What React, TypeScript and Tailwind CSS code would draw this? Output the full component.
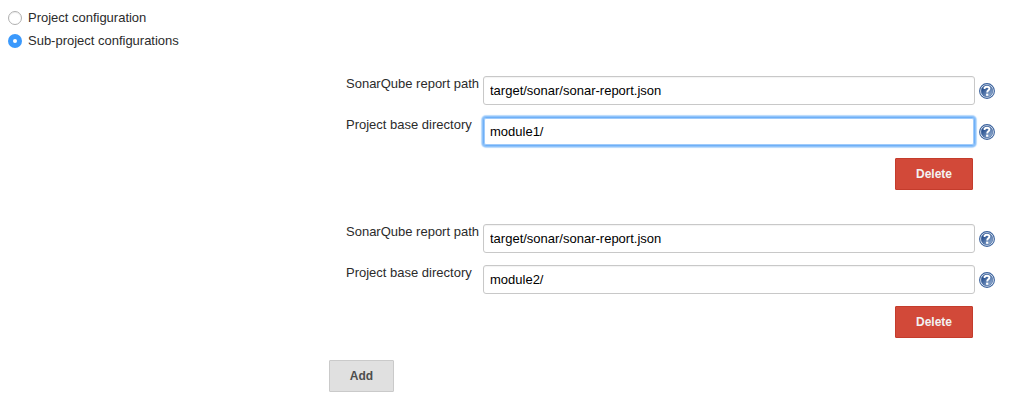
import { useState } from "react";

function HelpIcon() {
  return (
    <svg width="16" height="16" viewBox="0 0 16 16" className="block shrink-0" role="img" aria-label="Help">
      <defs>
        <linearGradient id="helpFill" x1="0" y1="0" x2="1" y2="1">
          <stop offset="0.25" stopColor="#2a5290" />
          <stop offset="1" stopColor="#a5bddc" />
        </linearGradient>
      </defs>
      <circle cx="8" cy="8" r="7.4" fill="#fff" stroke="#39619d" strokeWidth="1.1" />
      <circle cx="8" cy="8" r="5.9" fill="url(#helpFill)" stroke="#3a619c" strokeWidth="0.6" />
      <path d="M5.6 5.9V4.6Q6.4 3.7 8 3.7Q10.4 3.7 10.4 5.6Q10.4 6.7 9.3 7.4Q8.2 8.1 8.2 9.5" fill="none" stroke="#fff" strokeWidth="1.9" />
      <rect x="7.1" y="10.6" width="2.2" height="2.2" fill="#fff" />
    </svg>
  );
}

function Radio({ label, checked, onSelect }: { label: string; checked: boolean; onSelect: () => void }) {
  return (
    <label className="flex h-[23px] items-center">
      <input type="radio" name="scope" className="sr-only" checked={checked} onChange={onSelect} />
      {checked ? (
        <span className="flex size-[14px] items-center justify-center rounded-full bg-[#3b99fc]">
          <span className="size-1 rounded-full bg-white" />
        </span>
      ) : (
        <span className="size-[14px] rounded-full border border-[#b0b0b0] bg-white shadow-[inset_0_1px_1px_#00000012]" />
      )}
      <span className="ml-1.5 tracking-[-0.01px]">{label}</span>
    </label>
  );
}

function Field({ label, value, focused, onChange }: { label: string; value: string; focused?: boolean; onChange: (v: string) => void }) {
  return (
    <label className="flex h-[29px]">
      <span className="w-[137px] shrink-0 whitespace-nowrap leading-[15px]">{label}</span>
      <input
        type="text"
        value={value}
        onChange={(e) => onChange(e.target.value)}
        className={
          focused
            ? "h-[29px] w-[492px] rounded-[3px] border border-[#6fb0f7] bg-white px-1.5 text-black shadow-[0_0_0_1px_#8fc3fa,0_0_1px_2px_#b9dafc,inset_0_0_0_1px_#9fcbfb] outline-none"
            : "h-[29px] w-[492px] rounded-[3px] border border-[#c8c8c8] bg-white px-1.5 text-black shadow-[inset_0_1px_1px_#0000000d] outline-none"
        }
      />
      <span className="ml-1 flex items-center">
        <HelpIcon />
      </span>
    </label>
  );
}

const initialProjects = [
  { path: "target/sonar/sonar-report.json", base: "module1/" },
  { path: "target/sonar/sonar-report.json", base: "module2/" },
];

export default function App() {
  const [subProjects, setSubProjects] = useState(true);
  const [projects, setProjects] = useState(initialProjects);
  const update = (i: number, patch: Partial<(typeof initialProjects)[0]>) =>
    setProjects(projects.map((p, n) => (n === i ? { ...p, ...patch } : p)));

  return (
    <main className="h-[400px] w-[1018px] overflow-hidden bg-white pl-2 pt-[6px] font-['Liberation_Sans',Arial,sans-serif] text-[13px] text-[#2b2b2b]">
      <Radio label="Project configuration" checked={!subProjects} onSelect={() => setSubProjects(false)} />
      <Radio label="Sub-project configurations" checked={subProjects} onSelect={() => setSubProjects(true)} />
      <div className="ml-[338px] mt-6 flex w-[649px] flex-col gap-[34px]">
        {projects.map((p, i) => (
          <section key={i} className="flex flex-col gap-3">
            <Field label="SonarQube report path" value={p.path} onChange={(path) => update(i, { path })} />
            <Field label="Project base directory" value={p.base} focused={i === 0} onChange={(base) => update(i, { base })} />
            <button
              onClick={() => setProjects(projects.filter((_, n) => n !== i))}
              className="mr-[22px] h-8 w-[78px] self-end rounded-[1px] border border-[#c43c2c] bg-[#d24939] text-[12px] font-bold text-[#f2f2f2]"
            >
              Delete
            </button>
          </section>
        ))}
      </div>
      <button
        onClick={() => setProjects([...projects, { path: "", base: "" }])}
        className="ml-[321px] mt-[22px] block h-8 w-[65px] rounded-[1px] border border-[#cacaca] bg-[#e0e0e0] text-[12px] font-bold text-[#4d4d4d]"
      >
        Add
      </button>
    </main>
  );
}
